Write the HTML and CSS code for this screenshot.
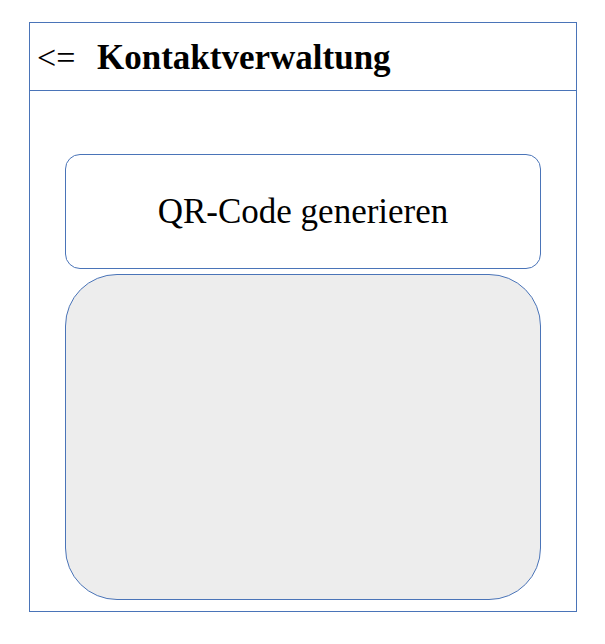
FILE: index.html
```html
<!DOCTYPE html>
<html>
<head>
<meta charset="utf-8">
<link rel="stylesheet" href="styles.css">
</head>
<body>
<div class="frame">
  <div class="header">
    <span class="back">&lt;=</span>
    <span class="title">Kontaktverwaltung</span>
  </div>
  <div class="content">
    <div class="qr-button">QR-Code generieren</div>
    <div class="qr-area"></div>
  </div>
</div>
</body>
</html>
```
FILE: styles.css
```css
html, body {
  margin: 0;
  padding: 0;
  background: #ffffff;
}
body {
  font-family: "Liberation Serif", "Times New Roman", serif;
  color: #000;
}
.frame {
  margin: 22px 0 0 29px;
  width: 548px;
  height: 590px;
  box-sizing: border-box;
  border: 1px solid #4a74b8;
  display: flex;
  flex-direction: column;
}
.header {
  height: 68px;
  box-sizing: border-box;
  border-bottom: 1px solid #4a74b8;
  display: flex;
  align-items: center;
  padding-left: 7px;
  padding-top: 2px;
}
.back {
  font-size: 34px;
  width: 60px;
}
.title {
  font-size: 35px;
  font-weight: bold;
}
.content {
  flex: 1;
  padding: 63px 35px 11px 35px;
  display: flex;
  flex-direction: column;
  gap: 5px;
}
.qr-button {
  height: 115px;
  box-sizing: border-box;
  border: 1px solid #4a74b8;
  border-radius: 15px;
  display: flex;
  align-items: center;
  justify-content: center;
  font-size: 35px;
}
.qr-area {
  flex: 1;
  box-sizing: border-box;
  border: 1px solid #4a74b8;
  border-radius: 52px;
  background: #ededed;
}
```
